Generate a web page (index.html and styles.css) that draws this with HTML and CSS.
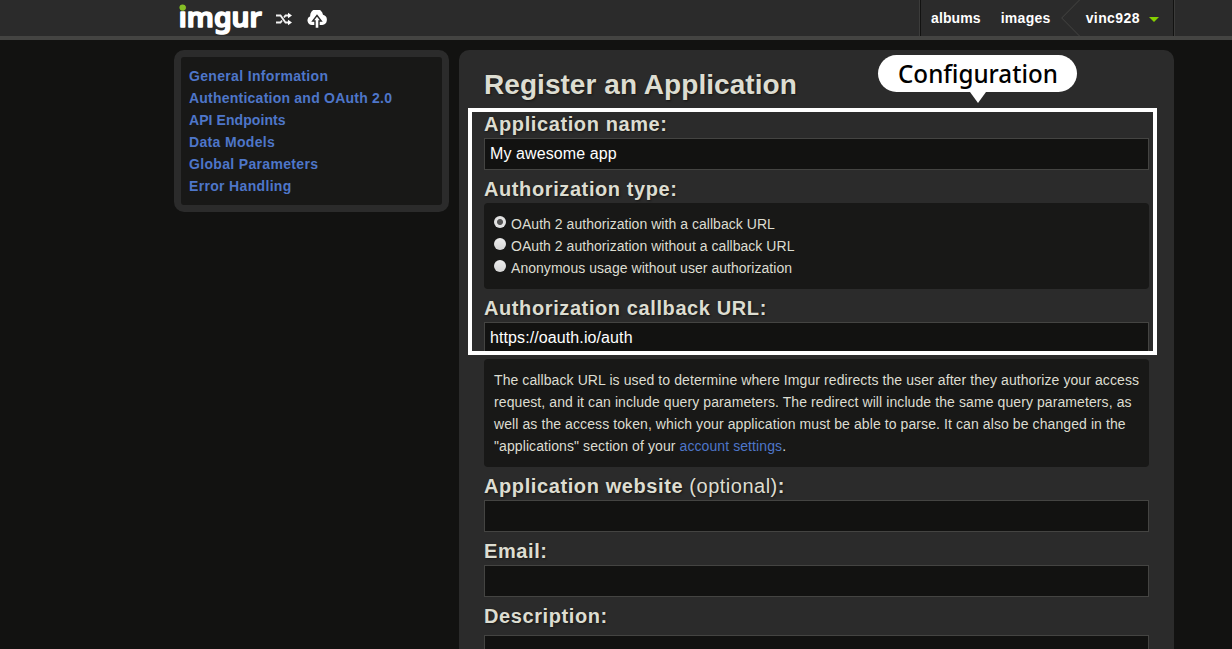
FILE: index.html
```html
<!DOCTYPE html>
<html lang="en">
<head>
<meta charset="utf-8">
<title>Register an Application</title>
<link rel="stylesheet" href="styles.css">
</head>
<body>
<header class="topbar">
  <div class="topbar-inner">
    <svg class="logo" width="92" height="36" viewBox="0 0 92 36">
      <defs>
        <linearGradient id="logo-fill" gradientUnits="userSpaceOnUse" x1="0" y1="0" x2="0" y2="36">
          <stop offset="0.3" stop-color="#85bf25"/>
          <stop offset="0.3" stop-color="#fff"/>
        </linearGradient>
      </defs>
      <text class="logo-text" x="4.800" y="26.500" textLength="83" lengthAdjust="spacingAndGlyphs" fill="url(#logo-fill)" stroke="url(#logo-fill)">imgur</text>
      <circle class="logo-dot" cx="8.600" cy="7.500" r="3.100"/>
    </svg>
    <svg class="icon-shuffle" width="18" height="14" viewBox="0 0 18 14">
      <path class="shuffle-line" d="M1 3.500h4.500l5 7H14M1 10.500h4.500L7 8.500M9 5.500l1.500-2H14"/>
      <path class="shape" d="M13 .7 17 3.500l-4 2.800zM13 7.700l4 2.800-4 2.800z"/>
    </svg>
    <svg class="icon-upload" width="20" height="18" viewBox="0 0 20 18">
      <path class="shape" d="M5 15A4.600 4.600 0 0 1 3.200 6.200 6.400 6.400 0 0 1 16 4.800 5.200 5.200 0 0 1 15.200 15z"/>
      <path class="arrow" d="M10 5.500 14.300 11H12V18.500H8V11H5.700z"/>
    </svg>
    <nav class="user-nav">
      <a class="nav-albums">albums</a>
      <a class="nav-images">images</a>
      <svg class="nav-chevron" width="19" height="36" viewBox="0 0 19 36"><path d="M18.500 0 .7 18 18.500 36"/></svg>
      <a class="nav-user">vinc928</a>
      <span class="caret"></span>
    </nav>
  </div>
</header>
<div class="page">
  <aside class="sidebar">
    <a>General Information</a>
    <a class="snug">Authentication and OAuth 2.0</a>
    <a class="tight">API Endpoints</a>
    <a>Data Models</a>
    <a>Global Parameters</a>
    <a>Error Handling</a>
  </aside>
  <main class="panel">
    <h1 class="title">Register an Application</h1>
    <form class="form">
      <div class="label">Application name:</div>
      <div class="field">My awesome app</div>
      <div class="label">Authorization type:</div>
      <div class="box options">
        <label class="option"><span class="radio checked"></span><span>OAuth 2 authorization with a callback URL</span></label>
        <label class="option"><span class="radio"></span><span>OAuth 2 authorization without a callback URL</span></label>
        <label class="option"><span class="radio"></span><span>Anonymous usage without user authorization</span></label>
      </div>
      <div class="label">Authorization callback URL:</div>
      <div class="field">https://oauth.io/auth</div>
      <div class="box note">The callback URL is used to determine where Imgur redirects the user after they authorize your access<br>request, and it can include query parameters. The redirect will include the same query parameters, as<br>well as the access token, which your application must be able to parse. It can also be changed in the<br>"applications" section of your <a class="link">account settings</a>.</div>
      <div class="label">Application website <span class="optional">(optional)</span>:</div>
      <div class="field"></div>
      <div class="label">Email:</div>
      <div class="field"></div>
      <div class="label">Description:</div>
      <div class="field area"></div>
    </form>
    <div class="highlight"></div>
    <div class="callout"><span class="callout-text">Configuration</span></div>
  </main>
</div>
</body>
</html>
```
FILE: styles.css
```css
* { box-sizing: border-box; }
body {
  margin: 0;
  height: 649px;
  overflow: hidden;
  background: #121211;
  color: #ddddd1;
  font-family: "Liberation Sans", Arial, sans-serif;
  font-size: 14px;
}
.topbar { height: 40px; background: #2b2b2b; border-bottom: 4px solid #444442; }
.topbar-inner { width: 1000px; height: 36px; margin-left: 174px; display: flex; align-items: flex-start; }
.logo { display: block; overflow: visible; }
.logo-text {
  font: 600 26.5px/1 "Noto Sans", sans-serif;
  stroke-width: 1.5;
  stroke-linejoin: round;
}
.logo-dot { fill: #85bf25; }
.icon-shuffle { margin: 12px 0 0 9px; }
.icon-upload { margin: 10px 0 0 14px; }
.shape { fill: #fff; }
.arrow { fill: #fff; stroke: #2b2b2b; stroke-width: 1.4; }
.shuffle-line { fill: none; stroke: #f2f2f2; stroke-width: 1.8; }
.user-nav {
  width: 254px;
  height: 36px;
  margin-left: auto;
  padding-left: 10px;
  display: flex;
  align-items: center;
  border-left: 1px solid #121211;
  border-right: 1px solid #121211;
  box-shadow: -1px 0 #3c3c3b, 1px 0 #3c3c3b;
  color: #fff;
  font-weight: 700;
  letter-spacing: 0.1px;
}
.nav-images { margin-left: 20px; letter-spacing: 0.3px; }
.nav-chevron { margin-left: 10px; fill: none; stroke: #444442; }
.nav-user { margin-left: 6px; letter-spacing: 0.4px; }
.caret { margin: 2px 0 0 9px; border: 5.500px solid transparent; border-top: 5px solid #85d000; border-bottom: 0; }
.page { width: 1000px; margin: 10px 0 0 174px; display: flex; align-items: flex-start; gap: 10px; }
.sidebar {
  width: 275px;
  height: 162px;
  padding: 8px;
  border: 7px solid #2b2b2b;
  border-radius: 10px;
  background: #181817;
  display: flex;
  flex-direction: column;
  color: #4e76c9;
  font-weight: 700;
  line-height: 22px;
  letter-spacing: 0.33px;
}
.snug { letter-spacing: 0.23px; }
.tight { letter-spacing: 0.08px; }
.panel {
  position: relative;
  width: 715px;
  height: 599px;
  padding: 0 25px;
  border-radius: 10px 10px 0 0;
  background: #2b2b2b;
}
.title {
  height: 60px;
  margin: 0;
  padding-top: 16px;
  font-size: 28px;
  line-height: 37px;
  letter-spacing: 0.05px;
  text-shadow: 1px 1px 2px #181817;
}
.label { height: 28px; font-size: 20px; font-weight: 700; line-height: 28px; letter-spacing: 0.6px; text-shadow: 1px 1px 2px #181817; }
.optional { font-weight: 400; letter-spacing: 0.5px; }
.field {
  height: 32px;
  margin-bottom: 5px;
  padding: 0 5px;
  border: 1px solid #444442;
  background: #121211;
  color: #fff;
  font-size: 16px;
  line-height: 30px;
  letter-spacing: 0.1px;
}
.area { height: 14px; margin: 5px 0 0; border-bottom: 0; }
.box { margin-bottom: 5px; padding: 10px; border-radius: 4px; background: #181817; line-height: 22px; }
.options { height: 86px; letter-spacing: 0.04px; }
.option { height: 22px; display: flex; align-items: center; gap: 5px; }
.radio { width: 12px; height: 12px; margin-top: -5px; border-radius: 50%; background: linear-gradient(#ededed, #d5d5d5); }
.checked { background: radial-gradient(circle, #555 0 2.500px, #e2e2e2 3.500px); }
.note { height: 108px; white-space: nowrap; letter-spacing: 0.09px; }
.link { color: #4e76c9; }
.highlight { position: absolute; left: 9px; top: 58px; width: 689px; height: 247px; border: 4px solid #fff; }
.callout {
  position: absolute;
  left: 419px;
  top: 5px;
  width: 199px;
  height: 37px;
  border-radius: 19px;
  background: #fff;
  color: #000;
  font: 500 26px/37px "Noto Sans", sans-serif;
  text-align: center;
}
.callout-text { display: inline-block; transform: scaleX(0.93); }
.callout::after {
  content: "";
  position: absolute;
  left: 92px;
  top: 37px;
  border: 8px solid transparent;
  border-top: 11px solid #fff;
  border-bottom: 0;
}
```
